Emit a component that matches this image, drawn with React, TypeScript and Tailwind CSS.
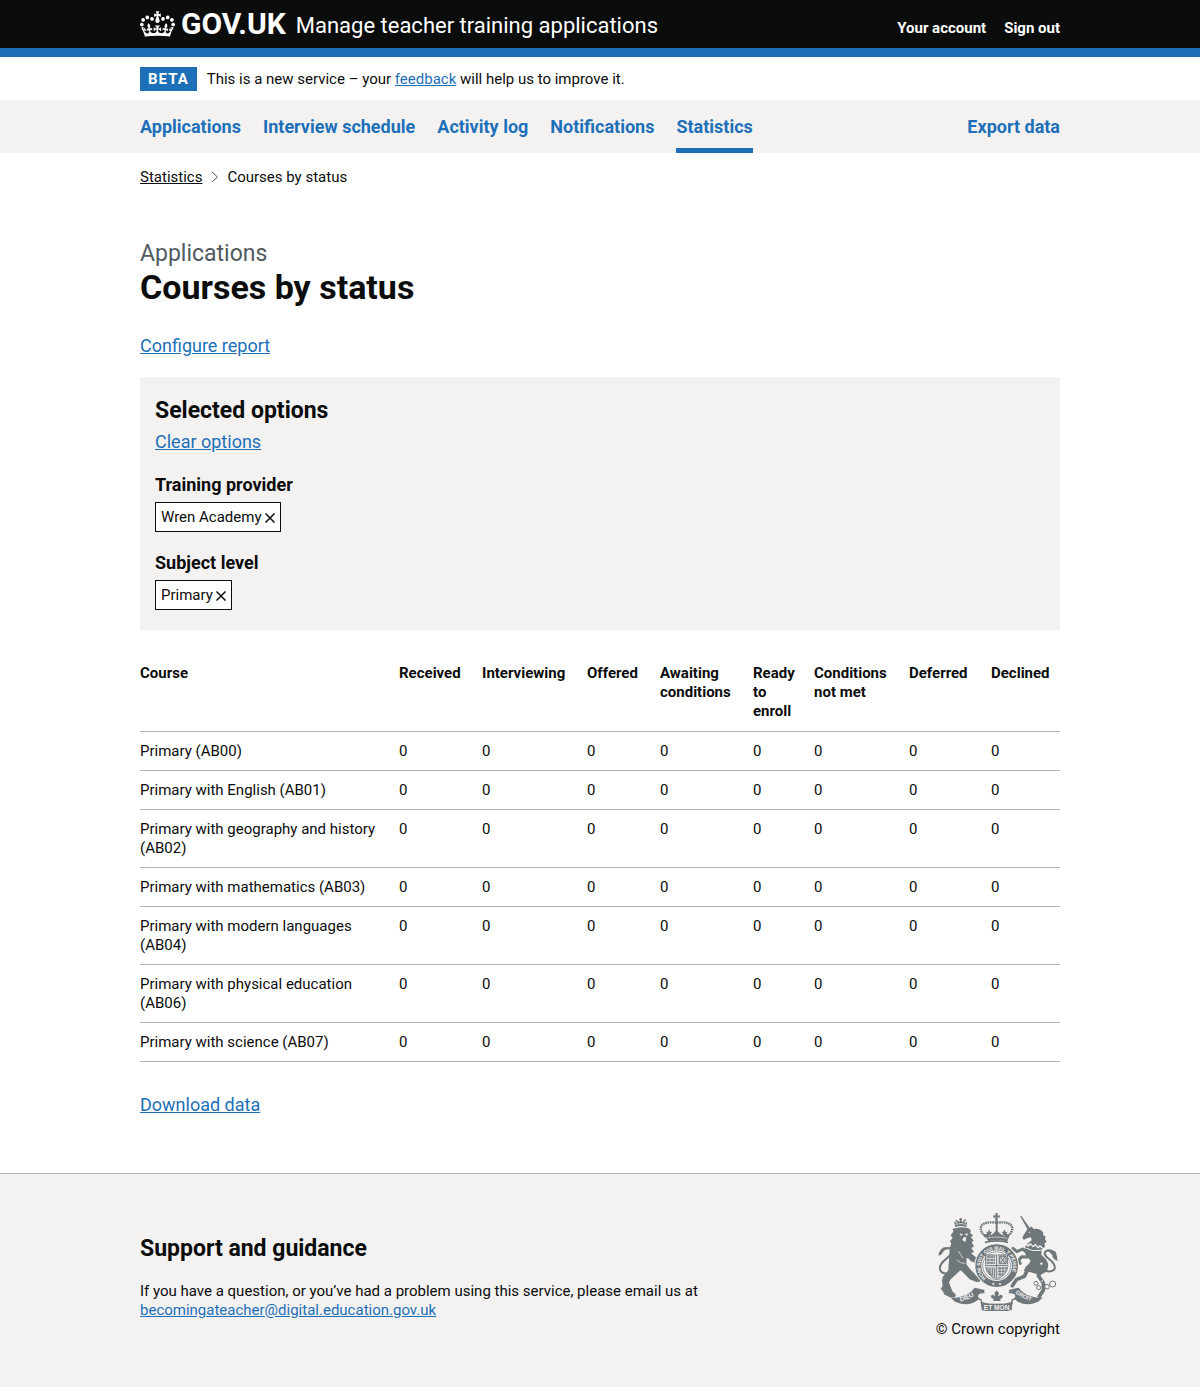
import type { ReactNode } from 'react'

const navItems = ['Applications', 'Interview schedule', 'Activity log', 'Notifications', 'Statistics']

const columns = [
  { label: 'Received', width: 'w-[83px]' },
  { label: 'Interviewing', width: 'w-[105px]' },
  { label: 'Offered', width: 'w-[73px]' },
  { label: 'Awaiting conditions', width: 'w-[93px]' },
  { label: 'Ready to enroll', width: 'w-[61px]' },
  { label: 'Conditions not met', width: 'w-[95px]' },
  { label: 'Deferred', width: 'w-[82px]' },
  { label: 'Declined', width: 'w-[69px]' },
]

const courses = [
  'Primary (AB00)',
  'Primary with English (AB01)',
  'Primary with geography and history (AB02)',
  'Primary with mathematics (AB03)',
  'Primary with modern languages (AB04)',
  'Primary with physical education (AB06)',
  'Primary with science (AB07)',
]

function Container({ children, className = '' }: { children: ReactNode; className?: string }) {
  return (
    <div className="px-4">
      <div className={`mx-auto max-w-[920px] ${className}`}>{children}</div>
    </div>
  )
}

function Crown() {
  return (
    <svg viewBox="0 0 132 97" className="h-[26px] w-[35px]" fill="currentColor" aria-hidden="true">
      <path d="M25 30.2c3.5 1.5 7.7-.2 9.1-3.7 1.5-3.6-.2-7.8-3.9-9.2-3.6-1.4-7.6.3-9.1 3.9-1.4 3.5.3 7.5 3.9 9zM9 39.5c3.6 1.5 7.8-.2 9.2-3.7 1.5-3.6-.2-7.8-3.9-9.1-3.6-1.5-7.6.2-9.1 3.8-1.4 3.5.3 7.5 3.8 9zM4.4 57.2c3.5 1.5 7.7-.2 9.1-3.8 1.5-3.6-.2-7.7-3.9-9.1-3.5-1.5-7.6.3-9.1 3.8-1.4 3.5.3 7.6 3.9 9.1zm38.3-21.4c3.5 1.5 7.7-.2 9.1-3.8 1.5-3.6-.2-7.7-3.9-9.1-3.6-1.5-7.6.3-9.1 3.8-1.3 3.6.4 7.7 3.9 9.1zm64.4-5.6c-3.6 1.5-7.8-.2-9.1-3.7-1.5-3.6.2-7.8 3.8-9.2 3.6-1.4 7.7.3 9.2 3.9 1.3 3.5-.4 7.5-3.9 9zm15.9 9.3c-3.6 1.5-7.7-.2-9.1-3.7-1.5-3.6.2-7.8 3.7-9.1 3.6-1.5 7.7.2 9.2 3.8 1.5 3.5-.3 7.5-3.8 9zm4.7 17.7c-3.6 1.5-7.8-.2-9.2-3.8-1.5-3.6.2-7.7 3.9-9.1 3.6-1.5 7.7.3 9.2 3.8 1.3 3.5-.4 7.6-3.9 9.1zM89.3 35.8c-3.6 1.5-7.8-.2-9.2-3.8-1.4-3.6.2-7.7 3.9-9.1 3.6-1.5 7.7.3 9.2 3.8 1.4 3.6-.3 7.7-3.9 9.1zM69.7 17.7l8.9 4.7V9.3l-8.9 2.8c-.2-.3-.5-.6-.9-.9L72.4 0H59.6l3.5 11.2c-.3.3-.6.5-.9.9l-8.8-2.8v13.1l8.8-4.7c.3.3.6.7.9.9l-5 15.4v.1c-.2.8-.4 1.6-.4 2.4 0 4.1 3.1 7.5 7 8.1h.2c.3 0 .7.1 1 .1.4 0 .7 0 1-.1h.2c4-.6 7.1-4.1 7.1-8.1 0-.8-.1-1.7-.4-2.4V34l-5.1-15.4c.4-.2.7-.6 1-.9zM66 92.8c16.9 0 32.8 1.1 47.1 3.2 4-16.9 8.9-26.7 14-33.5l-9.6-3.4c1 4.9 1.1 7.2 0 10.2-1.5-1.4-3-4.3-4.2-8.7L108.6 76c2.8-2 5-3.2 7.5-3.3-4.4 9.4-10 11.9-13.6 11.2-4.3-.8-6.3-4.6-5.6-7.9 1-4.7 5.7-5.9 8-.5 4.3-8.7-3-11.4-7.6-8.8 7.1-7.2 7.9-13.5 2.1-21.1-8 6.1-8.1 12.3-4.5 20.8-4.7-5.4-12.1-2.5-9.5 6.2 3.4-5.2 7.9-2 7.2 3.1-.6 4.3-6.4 7.8-13.5 7.2-10.3-.9-10.9-8-11.2-13.8 2.5-.5 7.1 1.8 11 7.3L80.2 60c-4.1 4.4-8 5.3-12.3 5.4 1.4-4.4 8-11.6 8-11.6H55.5s6.4 7.2 7.9 11.6c-4.2-.1-8-1-12.3-5.4l1.4 16.4c3.9-5.5 8.5-7.7 10.9-7.3-.3 5.8-.9 12.8-11.1 13.8-7.2.6-12.9-2.9-13.5-7.2-.7-5 3.8-8.3 7.1-3.1 2.7-8.7-4.6-11.6-9.4-6.2 3.7-8.5 3.6-14.7-4.6-20.8-5.8 7.6-5 13.9 2.2 21.1-4.7-2.6-11.9.1-7.7 8.8 2.3-5.5 7.1-4.2 8.1.5.7 3.3-1.3 7.1-5.7 7.9-3.5.7-9-1.8-13.5-11.2 2.5.1 4.7 1.3 7.5 3.3l-4.7-15.4c-1.2 4.4-2.7 7.2-4.3 8.7-1.1-3-.9-5.3 0-10.2l-9.5 3.4c5 6.9 9.9 16.7 14 33.5 14.8-2.1 30.8-3.2 47.7-3.2z" />
    </svg>
  )
}

function CoatOfArms() {
  return (
    <svg viewBox="51 36 360 294" className="h-[98px] w-[120px] text-[#6f777b]" fill="currentColor" aria-hidden="true">
      <defs>
        <path id="garter-arc" d="M195 232A49 49 0 1 1 259 232" />
        <path id="dieu-line" d="M118 301Q145 296 170 277" />
        <path id="droit-line" d="M283 277Q308 296 342 302" />
      </defs>

      {/* lion */}
      <g>
        <path d="M103 78l-4-16 8 4 3-8 5 5 4-9 5 9 5-5 3 8 7-4-3 16q-17-6-33 0z" />
        <circle cx="119" cy="55" r="4" />
        <circle cx="106" cy="59" r="3" />
        <circle cx="132" cy="58" r="3" />
        <path d="M103 70q16-5 33 0" stroke="#f3f2f1" strokeWidth="2" fill="none" />
        <path d="M104 82q16-7 38 0l8 6-3 7 9 8-6 6 8 10-6 5 7 12-8 5 8 12-9 4 14 11 8 10-6 9-16-6-9-10-5 2 1 18 12 15 20 21 13 6-6 9-10 1-20-8-25-26-3-1-15 14-13 12-6 10 5 14 5 13 11 10-3 8-16 0-17-9-2-8-8-8 6-9-2-15 2-12 17-20 1-18 2-24 1-25 5-13-4-8 8-9-6-8 8-11-2-9z" />
        <path d="M96 213Q65 225 57 206Q54 190 74 175Q96 158 90 145Q84 137 72 144" fill="none" stroke="currentColor" strokeWidth="6" />
        <path d="M52 164q4-20 17-25 13-2 18 5-18-1-23 13-4 7-12 7z" />
        <g fill="#f3f2f1">
          <path d="M116 97l10 3-6 5zM132 99l10-2-5 8zM128 109l8 0-3 14-9-6z" />
        </g>
        <path d="M108 177q10 12 25 10M112 150l14 22" stroke="#f3f2f1" strokeWidth="2" fill="none" />
      </g>

      {/* unicorn */}
      <g>
        <path d="M297 44l5 2 26 37-7 5z" />
        <path d="M331 76l7 8q20-3 29 11l-1 6 8 6-2 7 5 8-6 5 1 10-10 8-44-16 14-11-2-9-13 3-8 5-5-6 4-9 12-19 10-5z" />
        <path d="M316 130l46 11-1 20q14 10 20 26 3 14-7 27l-18 8-26-8-22-4q4-14 16-22l5-9-14-16q-7-14 1-33z" />
        <g fill="none" stroke="currentColor" strokeLinecap="round" strokeLinejoin="round">
          <path d="M322 158l-17-14-17 8-12-10" strokeWidth="9" />
          <path d="M322 168l-20-1-10 12 6 8" strokeWidth="9" />
          <path d="M320 206l-10 20-24 10-12 18" strokeWidth="11" />
          <path d="M366 206l-14 18 15 22 0 22-12 18" strokeWidth="11" />
        </g>
        <path d="M313 127l8 8 7-7 8 9 7-6 8 9 6-5 8 7" stroke="#f3f2f1" strokeWidth="4" fill="none" />
        <path d="M314 141q20 12 46 7" stroke="#f3f2f1" strokeWidth="3" fill="none" />
        <circle cx="326" cy="94" r="2" fill="#f3f2f1" />
        <path d="M364 206Q393 218 401 203Q404 189 384 174Q365 160 374 151Q386 143 402 155L406 172" fill="none" stroke="currentColor" strokeWidth="6" />
        <path d="M374 148q22-8 31 16l6 15q-17-4-18-18-8-10-19-13z" />
        <g fill="#f3f2f1" stroke="currentColor" strokeWidth="3">
          <circle cx="361" cy="188" r="5" />
          <circle cx="345" cy="247" r="6" />
          <circle cx="353" cy="260" r="6" />
          <circle cx="378" cy="257" r="7" />
          <circle cx="395" cy="249" r="9" />
          <circle cx="363" cy="240" r="4" />
        </g>
      </g>

      {/* royal crown */}
      <g>
        <path d="M222 37h9l-2 7 7-2v9l-7-2 2 9h-9l2-9-7 2v-9l7 2z" />
        <path d="M226 65Q181 60 179 82Q180 97 194 106M227 65Q272 60 274 82Q273 97 259 106" fill="none" stroke="currentColor" strokeWidth="7" strokeDasharray="5 2" />
        <path d="M224 57h6v50h-6z" />
        <path d="M188 105l10-8 8 8 12-8 9-10 9 10 12 8 8-8 9 8-6 16q-33-7-56 0z" />
        <path d="M204 85l4 8 6-1-5 6 3 8-8-4-7 4 3-8-5-6 6 1zM250 85l4 8 6-1-5 6 3 8-8-4-7 4 3-8-5-6 6 1z" />
        <path d="M194 112q32-7 65 0" stroke="#f3f2f1" strokeWidth="3" strokeDasharray="6 3" fill="none" />
        <path d="M192 124q35-9 69 0" stroke="currentColor" strokeWidth="5" fill="none" />
      </g>

      {/* garter and shield */}
      <circle cx="227" cy="194" r="67" fill="#f3f2f1" />
      <circle cx="227" cy="194" r="55" fill="none" stroke="currentColor" strokeWidth="18" />
      <text fontFamily="Liberation Sans" fontWeight="700" fontSize="15" fill="#f3f2f1">
        <textPath href="#garter-arc">HONI SOIT QUI MAL Y PENSE</textPath>
      </text>
      <circle cx="227" cy="194" r="42" fill="none" stroke="currentColor" strokeWidth="2" />
      <path d="M194 162h66v34q-2 26-33 38-31-12-33-38z" fill="#cdd0d1" stroke="currentColor" strokeWidth="3" />
      <path d="M227 160v74M192 194h70" stroke="#f3f2f1" strokeWidth="7" />
      <path d="M227 160v74M192 194h70" stroke="currentColor" strokeWidth="3" />
      <path d="M198 168h24M198 177h24M198 186h24M232 202h25M232 211h22M232 220h16" stroke="currentColor" strokeWidth="5" strokeDasharray="8 2" />
      <path d="M235 166h20v22h-20zM238 186l14-18M238 168l14 18" stroke="currentColor" strokeWidth="3" fill="none" />
      <path d="M200 200q0 14 14 24M207 200v20M214 200v24M221 200v28" stroke="currentColor" strokeWidth="3" fill="none" />
      <circle cx="217" cy="249" r="3" fill="#f3f2f1" />
      <circle cx="237" cy="249" r="3" fill="#f3f2f1" />

      {/* motto ribbon */}
      <path d="M88 289q19 4 35-3 25-8 38-26l30 7q-7 24-31 37-24 12-58-2z" />
      <path d="M366 289q-19 4-35-3-25-8-38-26l-30 7q7 24 31 37 24 12 58-2z" />
      <path d="M191 275q-22-2-22 12 2 8 12 10l3 29q43 8 86 0l3-29q10-2 12-10 0-14-22-12" fill="#f3f2f1" stroke="currentColor" strokeWidth="4" />
      <path d="M178 302q49 13 98 0l-7 25q-42 7-84 0z" />
      <path d="M227 268l7 9-3 9q13-10 14 1-1 7-8 6l2 7h-23l2-7q-8 0-8-7 1-10 13 0l-3-9z" />
      <g fontFamily="Liberation Sans" fontWeight="700" fill="#f3f2f1">
        <text fontSize="19"><textPath href="#dieu-line">DIEU</textPath></text>
        <text fontSize="17"><textPath href="#droit-line">DROIT</textPath></text>
        <text x="227" y="326" fontSize="20" textAnchor="middle">ET MON</text>
      </g>
    </svg>
  )
}

function FilterTag({ heading, value }: { heading: string; value: string }) {
  return (
    <div>
      <h3 className="text-[18px] leading-6 font-bold">{heading}</h3>
      <ul className="mt-[5px]">
        <li className="flex">
          <a
            href="#"
            aria-label={`Remove ${value}`}
            className="inline-flex h-[30px] items-center gap-[3px] border border-[#0b0c0c] bg-white px-[5px] text-[15px]"
          >
            {value}
            <svg viewBox="0 0 10 10" className="mt-px h-[10px] w-[10px]" fill="none" stroke="currentColor" strokeWidth="1.500" aria-hidden="true">
              <path d="M.5.5l9 9M9.500.5l-9 9" />
            </svg>
          </a>
        </li>
      </ul>
    </div>
  )
}

export default function App() {
  return (
    <div className="bg-white font-['Roboto',sans-serif] text-[#0b0c0c]">
      <header className="border-b-9 border-[#1d70b8] bg-[#0b0c0c] text-white">
        <Container className="flex min-h-12 flex-wrap items-center justify-between gap-x-4">
          <div className="flex flex-wrap items-center gap-x-[10px]">
            <a href="#" className="flex items-center gap-[6px]">
              <Crown />
              <span className="text-[30px] leading-9 font-bold">GOV.UK</span>
            </a>
            <a href="#" className="pt-1 text-[22px] leading-7">Manage teacher training applications</a>
          </div>
          <nav aria-label="Account" className="flex gap-[18px] pt-2 text-[15px] leading-5 font-bold">
            <a href="#">Your account</a>
            <a href="#">Sign out</a>
          </nav>
        </Container>
      </header>

      <Container className="flex min-h-[43px] items-center gap-[10px] text-[15px]">
        <strong className="bg-[#1d70b8] px-2 text-[15px] leading-6 tracking-[1px] text-white">BETA</strong>
        <span className="pt-px">
          This is a new service – your <a href="#" className="text-[#1d70b8] underline">feedback</a> will help us to improve it.
        </span>
      </Container>

      <div className="bg-[#f3f2f1]">
        <Container>
          <nav aria-label="Primary" className="flex flex-wrap gap-x-[22px] text-[18px] leading-6 font-bold text-[#1d70b8]">
            {navItems.map((item) => (
              <a
                key={item}
                href="#"
                aria-current={item === 'Statistics' ? 'page' : undefined}
                className="border-b-5 border-transparent pt-[15px] pb-[9px] aria-[current=page]:border-[#1d70b8]"
              >
                {item}
              </a>
            ))}
            <a href="#" className="ml-auto pt-[15px]">Export data</a>
          </nav>
        </Container>
      </div>

      <Container>
        <nav aria-label="Breadcrumb" className="pt-[14px] text-[15px] leading-5">
          <ol className="flex items-center">
            <li><a href="#" className="underline">Statistics</a></li>
            <li className="flex items-center">
              <svg viewBox="0 0 8 12" className="mr-2 ml-[9px] h-3 w-2" fill="none" stroke="#505a5f" aria-hidden="true">
                <path d="M1 1l5.500 5L1 11" />
              </svg>
              Courses by status
            </li>
          </ol>
        </nav>

        <main className="pt-[53px] pb-14">
          <h1 className="text-[34px] leading-[38px] font-bold">
            <span className="block text-[23px] leading-7 font-normal text-[#505a5f]">Applications</span>
            Courses by status
          </h1>
          <p className="mt-7 text-[18px] leading-6">
            <a href="#" className="text-[#1d70b8] underline">Configure report</a>
          </p>

          <section className="mt-[19px] bg-[#f3f2f1] px-[15px] py-5">
            <h2 className="text-[23px] leading-7 font-bold">Selected options</h2>
            <p className="mt-[5px] mb-[19px] text-[18px] leading-6">
              <a href="#" className="text-[#1d70b8] underline">Clear options</a>
            </p>
            <div className="flex flex-col gap-[19px]">
              <FilterTag heading="Training provider" value="Wren Academy" />
              <FilterTag heading="Subject level" value="Primary" />
            </div>
          </section>

          <table className="mt-6 w-full table-fixed text-left text-[15px] leading-[19px]">
            <thead>
              <tr className="border-b border-[#b1b4b6] align-top">
                <th scope="col" className="py-[10px] pr-5">Course</th>
                {columns.map((column) => (
                  <th key={column.label} scope="col" className={`py-[10px] ${column.width}`}>
                    <div className="w-min">{column.label}</div>
                  </th>
                ))}
              </tr>
            </thead>
            <tbody>
              {courses.map((course) => (
                <tr key={course} className="border-b border-[#b1b4b6] align-top">
                  <td className="pt-[10px] pr-5 pb-[9px]">{course}</td>
                  {columns.map((column) => (
                    <td key={column.label} className="pt-[10px] pb-[9px]">0</td>
                  ))}
                </tr>
              ))}
            </tbody>
          </table>

          <p className="mt-[31px] text-[18px] leading-6">
            <a href="#" className="text-[#1d70b8] underline">Download data</a>
          </p>
        </main>
      </Container>

      <footer className="border-t border-[#b1b4b6] bg-[#f3f2f1] pt-[39px] pb-12">
        <Container className="flex flex-wrap justify-between gap-6">
          <div className="pt-[22px]">
            <h2 className="text-[23px] leading-7 font-bold">Support and guidance</h2>
            <p className="mt-[19px] text-[15px] leading-[19px]">
              If you have a question, or you’ve had a problem using this service, please email us at
              <br />
              <a href="#" className="text-[#1d70b8] underline">becomingateacher@digital.education.gov.uk</a>
            </p>
          </div>
          <a href="#" className="flex flex-col items-center gap-[9px] text-[15px] leading-[19px]">
            <CoatOfArms />
            © Crown copyright
          </a>
        </Container>
      </footer>
    </div>
  )
}
